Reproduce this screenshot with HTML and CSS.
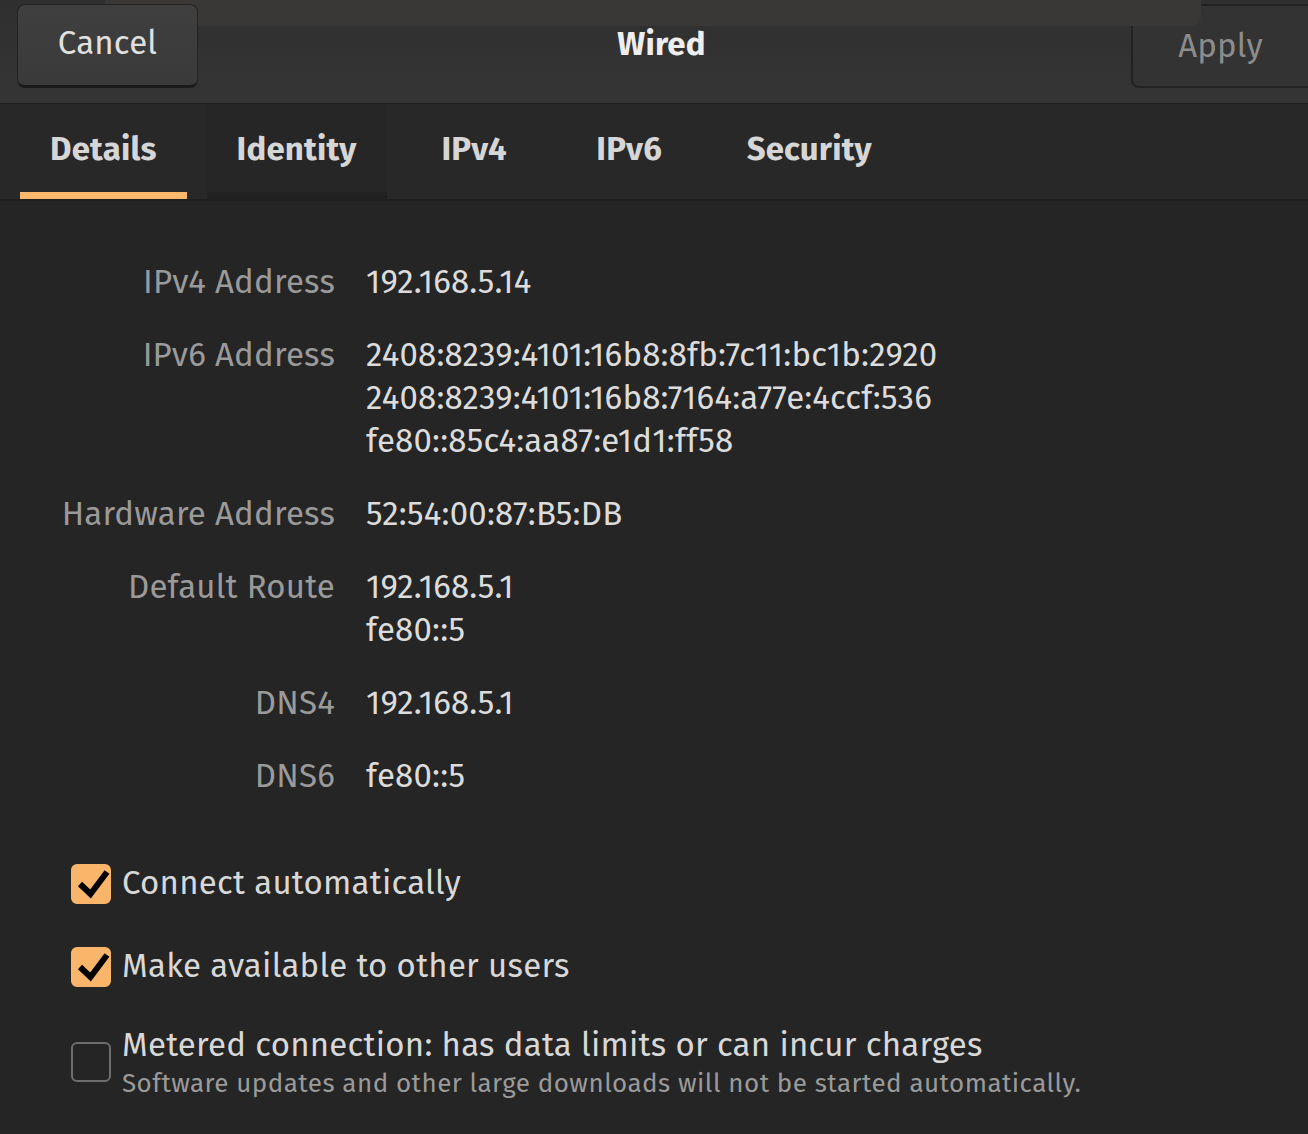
FILE: index.html
```html
<!DOCTYPE html>
<html lang="en">
<head>
<meta charset="utf-8">
<title>Wired</title>
<link rel="stylesheet" href="styles.css">
</head>
<body>
<div class="dialog">
  <header class="headerbar">
    <div class="overlay-strip"></div>
    <button class="btn btn-cancel">Cancel</button>
    <div class="title">Wired</div>
    <button class="btn btn-apply" disabled>Apply</button>
  </header>
  <nav class="tabs">
    <div class="tab active">Details</div>
    <div class="tab hover">Identity</div>
    <div class="tab">IPv4</div>
    <div class="tab">IPv6</div>
    <div class="tab">Security</div>
  </nav>
  <main class="content">
    <div class="details">
      <div class="label">IPv4 Address</div>
      <div class="value">192.168.5.14</div>
      <div class="label">IPv6 Address</div>
      <div class="value">2408:8239:4101:16b8:8fb:7c11:bc1b:2920<br>2408:8239:4101:16b8:7164:a77e:4ccf:536<br>fe80::85c4:aa87:e1d1:ff58</div>
      <div class="label">Hardware Address</div>
      <div class="value">52:54:00:87:B5:DB</div>
      <div class="label">Default Route</div>
      <div class="value">192.168.5.1<br>fe80::5</div>
      <div class="label">DNS4</div>
      <div class="value">192.168.5.1</div>
      <div class="label">DNS6</div>
      <div class="value">fe80::5</div>
    </div>
    <div class="checks">
      <div class="check-row">
        <span class="box checked"><svg viewBox="0 0 40 40" width="40" height="40"><path d="M9 20 L19.5 30 L36 8" fill="none" stroke="#000" stroke-width="6" stroke-linejoin="miter"/></svg></span>
        <span class="check-text">Connect automatically</span>
      </div>
      <div class="check-row">
        <span class="box checked"><svg viewBox="0 0 40 40" width="40" height="40"><path d="M9 20 L19.5 30 L36 8" fill="none" stroke="#000" stroke-width="6" stroke-linejoin="miter"/></svg></span>
        <span class="check-text">Make available to other users</span>
      </div>
      <div class="check-row metered">
        <span class="box"></span>
        <span class="check-text">Metered connection: has data limits or can incur charges
          <span class="sub">Software updates and other large downloads will not be started automatically.</span>
        </span>
      </div>
    </div>
  </main>
</div>
</body>
</html>
```

FILE: styles.css
```css
html, body {
  margin: 0;
  padding: 0;
  background: #252525;
  height: 100%;
}
body {
  font-family: "Fira Sans", "Open Sans", "Noto Sans", sans-serif;
  color: #dadada;
  overflow: hidden;
}
.dialog {
  width: 1308px;
  height: 1134px;
  display: flex;
  flex-direction: column;
  background: #252525;
}
.headerbar {
  position: relative;
  height: 104px;
  box-sizing: border-box;
  padding: 4px 0 0 17px;
  display: flex;
  align-items: flex-start;
  background: linear-gradient(to bottom, #2f2f2f, #353535);
  border-bottom: 1px solid #1d1d1d;
  overflow: hidden;
}
.overlay-strip {
  position: absolute;
  z-index: 2;
  left: 105px;
  top: 0;
  width: 1096px;
  height: 26px;
  background: #3a3836;
  border-radius: 0 0 9px 9px;
}
.btn {
  font-family: inherit;
  font-size: 33px;
  letter-spacing: 0.2px;
  height: 84px;
  border-radius: 8px;
  box-sizing: border-box;
  padding: 0;
  flex-shrink: 0;
}
.btn-cancel {
  position: relative;
  z-index: 3;
  width: 181px;
  color: #e0e0e0;
  background: linear-gradient(to bottom, #3f3f3f, #3a3a3a);
  border: 1px solid #232323;
  border-bottom: 3px solid #1a1a1a;
  padding-bottom: 4px;
}
.btn-apply {
  position: relative;
  z-index: 1;
  width: 200px;
  margin-right: -23px;
  color: #8c8c8c;
  background: #333;
  border: 2px solid #222;
  padding-right: 21px;
}
.title {
  flex: 1;
  text-align: center;
  font-weight: 700;
  font-size: 33px;
  letter-spacing: 0.2px;
  line-height: 80px;
  color: #eeeeee;
  padding-right: 6px;
}
.tabs {
  height: 95px;
  display: flex;
  gap: 20px;
  padding-left: 20px;
  background: #282828;
  border-bottom: 2px solid #1f1f1f;
}
.tab {
  min-width: 135px;
  padding: 0 30px;
  font-weight: 700;
  font-size: 33px;
  letter-spacing: 0.2px;
  color: #d6d6d6;
  display: flex;
  align-items: center;
  justify-content: center;
  border-bottom: 7px solid transparent;
  box-sizing: border-box;
  height: 100%;
  padding-top: 2px;
}
.tab.active {
  border-bottom-color: #fbb86c;
}
.tab.hover {
  background: #262626;
  border-bottom-color: #212121;
}
.content {
  padding-top: 60px;
}
.details {
  display: grid;
  grid-template-columns: 335px 1fr;
  column-gap: 31px;
  row-gap: 30px;
  font-size: 33px;
  letter-spacing: 0.2px;
  line-height: 43px;
}
.label {
  text-align: right;
  color: #9a9a9a;
}
.value {
  color: #dcdcdc;
}
.checks {
  margin-top: 64px;
  padding-left: 71px;
  display: flex;
  flex-direction: column;
  gap: 40px;
}
.check-row {
  display: flex;
  align-items: center;
  gap: 11px;
  font-size: 33px;
  letter-spacing: 0.25px;
  line-height: 43px;
  color: #d8d8d8;
}
.check-row.metered {
  margin-top: -4px;
}
.box {
  width: 40px;
  height: 40px;
  box-sizing: border-box;
  border-radius: 6px;
  border: 2px solid #6e6e6e;
  flex-shrink: 0;
  display: flex;
}
.box.checked {
  background: #f9b56a;
  border-color: #f9b56a;
}
.box.checked svg {
  margin: -2px;
}
.check-text {
  display: flex;
  flex-direction: column;
}
.sub {
  font-size: 26px;
  letter-spacing: 0.45px;
  line-height: 33px;
  color: #9a9a9a;
}
```
